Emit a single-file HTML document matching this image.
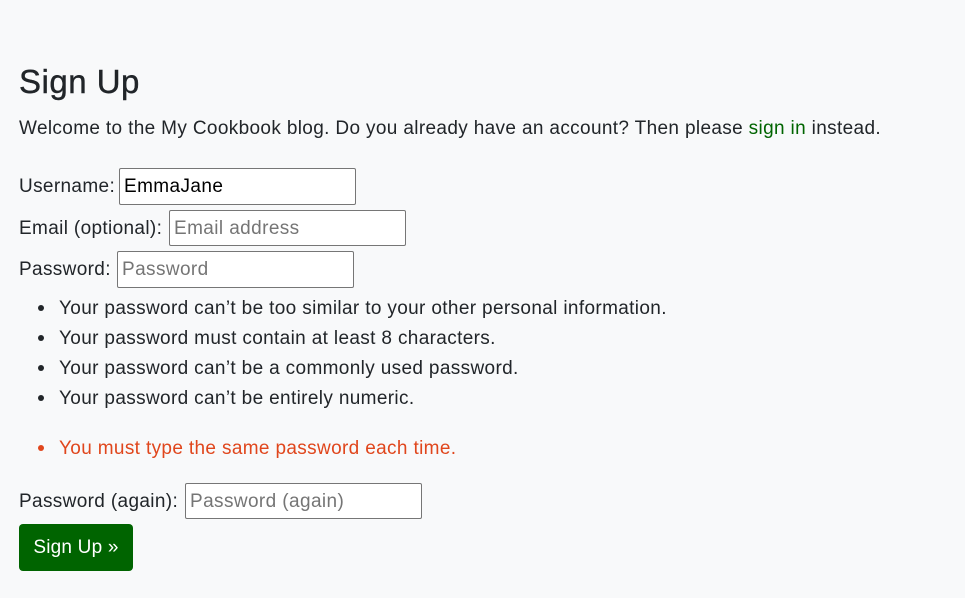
<!DOCTYPE html>
<html><head><meta charset="utf-8"><style>
body{margin:0;width:965px;height:598px;background:#f8f9fa;font-family:"Liberation Sans",Arial,sans-serif;color:#212529;position:relative;overflow:hidden}
.a{position:absolute;white-space:nowrap}
.t{font-size:19px;line-height:24px;letter-spacing:0.35px;margin-top:1px}
.in{position:absolute;height:35px;width:235px;border:1px solid #767676;border-radius:2px;background:#fff;font-size:19px;letter-spacing:0.4px;line-height:36px;padding-left:4px;box-sizing:border-box;white-space:nowrap}
.ph{color:#757575}
.dot{position:absolute;width:6px;height:6px;border-radius:50%;background:#212529}
</style></head><body>
<div class="a" style="left:19px;top:62px;font-size:33px;line-height:40px;letter-spacing:0.5px;-webkit-text-stroke:0.4px #212529">Sign Up</div>
<div class="a t" style="left:19px;top:116px">Welcome to the My Cookbook blog. Do you already have an account? Then please <span style="color:#006400">sign in</span> instead.</div>

<div class="a t" style="left:19px;top:174px">Username:</div>
<div class="in" style="left:119px;top:168px;width:237px;height:37px;color:#000">EmmaJane</div>
<div class="a t" style="left:19px;top:216px">Email (optional):</div>
<div class="in ph" style="left:169px;top:210px;width:237px;height:36px">Email address</div>
<div class="a t" style="left:19px;top:257px">Password:</div>
<div class="in ph" style="left:117px;top:251px;width:237px;height:37px">Password</div>

<div class="dot" style="left:38px;top:305px"></div><div class="a t" style="left:59px;top:296px">Your password can’t be too similar to your other personal information.</div>
<div class="dot" style="left:38px;top:335px"></div><div class="a t" style="left:59px;top:326px">Your password must contain at least 8 characters.</div>
<div class="dot" style="left:38px;top:365px"></div><div class="a t" style="left:59px;top:356px">Your password can’t be a commonly used password.</div>
<div class="dot" style="left:38px;top:395px"></div><div class="a t" style="left:59px;top:386px">Your password can’t be entirely numeric.</div>
<div class="dot" style="left:38px;top:445px;background:#e0461c"></div><div class="a t" style="left:59px;top:436px;color:#e0461c">You must type the same password each time.</div>

<div class="a t" style="left:19px;top:489px">Password (again):</div>
<div class="in ph" style="left:185px;top:483px;width:237px;height:36px">Password (again)</div>
<div class="a" style="left:19px;top:524px;width:114px;height:47px;background:#006400;border-radius:4px;color:#fff;font-size:19px;letter-spacing:0.2px;line-height:48px;text-align:center">Sign Up »</div>
</body></html>
